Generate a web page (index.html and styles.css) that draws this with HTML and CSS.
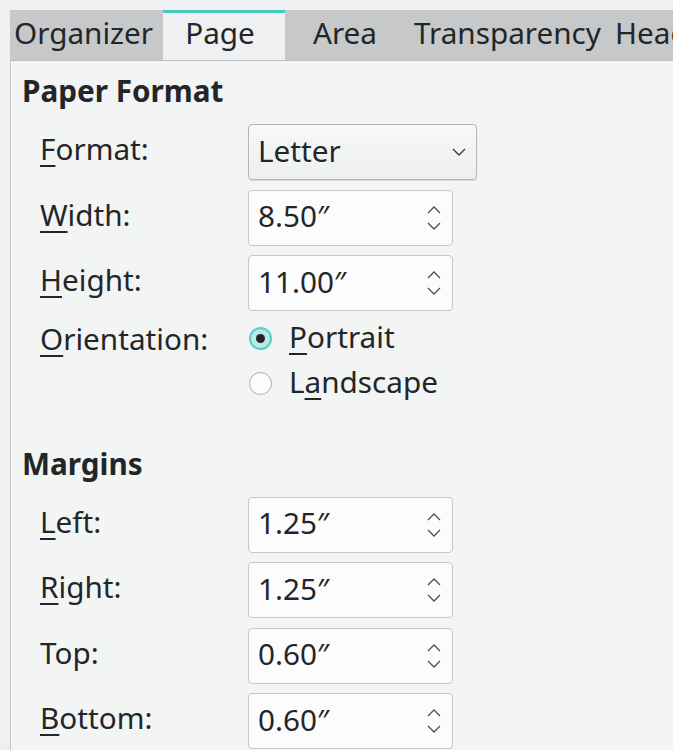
FILE: index.html
```html
<!DOCTYPE html>
<html lang="en">
<head>
	<meta charset="UTF-8">
	<meta name="viewport" content="width=device-width, user-scalable=no">
	<title>Page Style</title>
	<link rel="stylesheet" href="styles.css">
</head>
<body>
<div class="dialog_wrap">
	<ul class="tab_bar">
		<li class="tab_item tab_organizer">Organizer</li>
		<li class="tab_item tab_page on">Page</li>
		<li class="tab_item tab_area">Area</li>
		<li class="tab_item tab_trans">Transparency</li>
		<li class="tab_item tab_head">Header</li>
	</ul>
	<div class="tab_panel">
		<h2 class="group_title">Paper Format</h2>
		<div class="form_grid">
			<label class="field_label"><u>F</u>ormat:</label>
			<div class="combo_box">
				<span class="field_value">Letter</span>
				<svg class="combo_arrow" width="16" height="10" viewBox="0 0 16 10"><polyline points="2,2 8,8 14,2" fill="none" stroke="#3b3e41" stroke-width="1.4"/></svg>
			</div>

			<label class="field_label"><u>W</u>idth:</label>
			<div class="spin_box">
				<span class="field_value">8.50″</span>
				<svg class="spin_arrow" width="16" height="28" viewBox="0 0 16 28"><polyline points="2,9 8,3 14,9" fill="none" stroke="#4d5055" stroke-width="1.3"/><polyline points="2,19 8,25 14,19" fill="none" stroke="#4d5055" stroke-width="1.3"/></svg>
			</div>

			<label class="field_label"><u>H</u>eight:</label>
			<div class="spin_box">
				<span class="field_value">11.00″</span>
				<svg class="spin_arrow" width="16" height="28" viewBox="0 0 16 28"><polyline points="2,9 8,3 14,9" fill="none" stroke="#4d5055" stroke-width="1.3"/><polyline points="2,19 8,25 14,19" fill="none" stroke="#4d5055" stroke-width="1.3"/></svg>
			</div>

			<label class="field_label label_top"><u>O</u>rientation:</label>
			<div class="radio_group">
				<div class="radio_item">
					<span class="radio_mark checked"></span>
					<span class="radio_text"><u>P</u>ortrait</span>
				</div>
				<div class="radio_item">
					<span class="radio_mark"></span>
					<span class="radio_text">L<u>a</u>ndscape</span>
				</div>
			</div>
		</div>

		<h2 class="group_title margins_title">Margins</h2>
		<div class="form_grid">
			<label class="field_label"><u>L</u>eft:</label>
			<div class="spin_box">
				<span class="field_value">1.25″</span>
				<svg class="spin_arrow" width="16" height="28" viewBox="0 0 16 28"><polyline points="2,9 8,3 14,9" fill="none" stroke="#4d5055" stroke-width="1.3"/><polyline points="2,19 8,25 14,19" fill="none" stroke="#4d5055" stroke-width="1.3"/></svg>
			</div>

			<label class="field_label"><u>R</u>ight:</label>
			<div class="spin_box">
				<span class="field_value">1.25″</span>
				<svg class="spin_arrow" width="16" height="28" viewBox="0 0 16 28"><polyline points="2,9 8,3 14,9" fill="none" stroke="#4d5055" stroke-width="1.3"/><polyline points="2,19 8,25 14,19" fill="none" stroke="#4d5055" stroke-width="1.3"/></svg>
			</div>

			<label class="field_label">Top:</label>
			<div class="spin_box">
				<span class="field_value">0.60″</span>
				<svg class="spin_arrow" width="16" height="28" viewBox="0 0 16 28"><polyline points="2,9 8,3 14,9" fill="none" stroke="#4d5055" stroke-width="1.3"/><polyline points="2,19 8,25 14,19" fill="none" stroke="#4d5055" stroke-width="1.3"/></svg>
			</div>

			<label class="field_label"><u>B</u>ottom:</label>
			<div class="spin_box">
				<span class="field_value">0.60″</span>
				<svg class="spin_arrow" width="16" height="28" viewBox="0 0 16 28"><polyline points="2,9 8,3 14,9" fill="none" stroke="#4d5055" stroke-width="1.3"/><polyline points="2,19 8,25 14,19" fill="none" stroke="#4d5055" stroke-width="1.3"/></svg>
			</div>
		</div>
	</div>
</div>
</body>
</html>
```

FILE: styles.css
```css
body,div,ul,li,h2,label{margin:0;padding:0}
ul,li{list-style:none}
body{background:#eff0f1}
body,label{font-size:29.7px;line-height:1.3;font-family:'Noto Sans','DejaVu Sans',sans-serif;color:#232629}
u{text-decoration-thickness:2px;text-underline-offset:5px}

.dialog_wrap{width:673px; height:750px; overflow:hidden; padding:10px 0 0 10px; box-sizing:border-box; background:#eff0f1}

/* tabs */
.dialog_wrap .tab_bar{display:flex; height:51px; background:#c7c8c9; border-bottom:1px solid #bdbebf; box-sizing:border-box; overflow:hidden; white-space:nowrap}
.dialog_wrap .tab_bar .tab_item{flex:none; height:50px; line-height:46px; text-align:center; box-sizing:border-box}
.dialog_wrap .tab_bar .tab_organizer{width:153px; text-align:left; padding-left:4px}
.dialog_wrap .tab_bar .tab_page{width:122px; padding-right:8px}
.dialog_wrap .tab_bar .tab_area{width:120px}
.dialog_wrap .tab_bar .tab_trans{width:205px}
.dialog_wrap .tab_bar .tab_head{width:200px; text-align:left; padding-left:5px}
.dialog_wrap .tab_bar .on{background:#eff0f1; border-top:3px solid #45c9bf; line-height:40px; height:51px}

/* panel */
.dialog_wrap .tab_panel{height:700px; padding:12px 0 0 11px; border-left:1px solid #c4c5c6; background:#f3f4f4}
.dialog_wrap .group_title{font-size:29.7px; font-weight:bold; line-height:36px; height:38px}
.dialog_wrap .margins_title{margin-top:45px}
.dialog_wrap .form_grid{display:grid; grid-template-columns:208px auto; row-gap:9.5px; margin-top:13px; padding-left:18px; align-items:center; justify-items:start}
.dialog_wrap .field_label{white-space:nowrap; padding-bottom:5px}
.dialog_wrap .label_top{align-self:start; line-height:35px; padding-bottom:0}

/* inputs */
.dialog_wrap .combo_box,
.dialog_wrap .spin_box{display:flex; align-items:center; justify-content:space-between; height:56px; box-sizing:border-box; padding:0 9px 0 9px; border:1px solid #c5c6c7; border-radius:4px; background:#fcfcfc}
.dialog_wrap .combo_box{width:229px; padding-right:9px; border-color:#b4b5b6; background:linear-gradient(#f7f8f8,#eeefef); box-shadow:0 1px 1px rgba(0,0,0,0.12)}
.dialog_wrap .spin_box{width:205px; padding-right:10px}
.dialog_wrap .field_value{line-height:1; padding-bottom:3px}

/* radios */
.dialog_wrap .radio_group{display:flex; flex-direction:column; gap:10px}
.dialog_wrap .radio_item{display:flex; align-items:center; height:35px}
.dialog_wrap .radio_mark{flex:none; width:23px; height:23px; margin:0 17px 0 1px; box-sizing:border-box; border:1px solid #a9abad; border-radius:50%; background:#fcfcfc; display:flex; align-items:center; justify-content:center}
.dialog_wrap .radio_mark.checked{border:2px solid #55cfc5; background:#b6ebe6}
.dialog_wrap .radio_mark.checked:after{content:''; width:9px; height:9px; border-radius:50%; background:#232629}
.dialog_wrap .radio_text{padding-bottom:2px}
```
